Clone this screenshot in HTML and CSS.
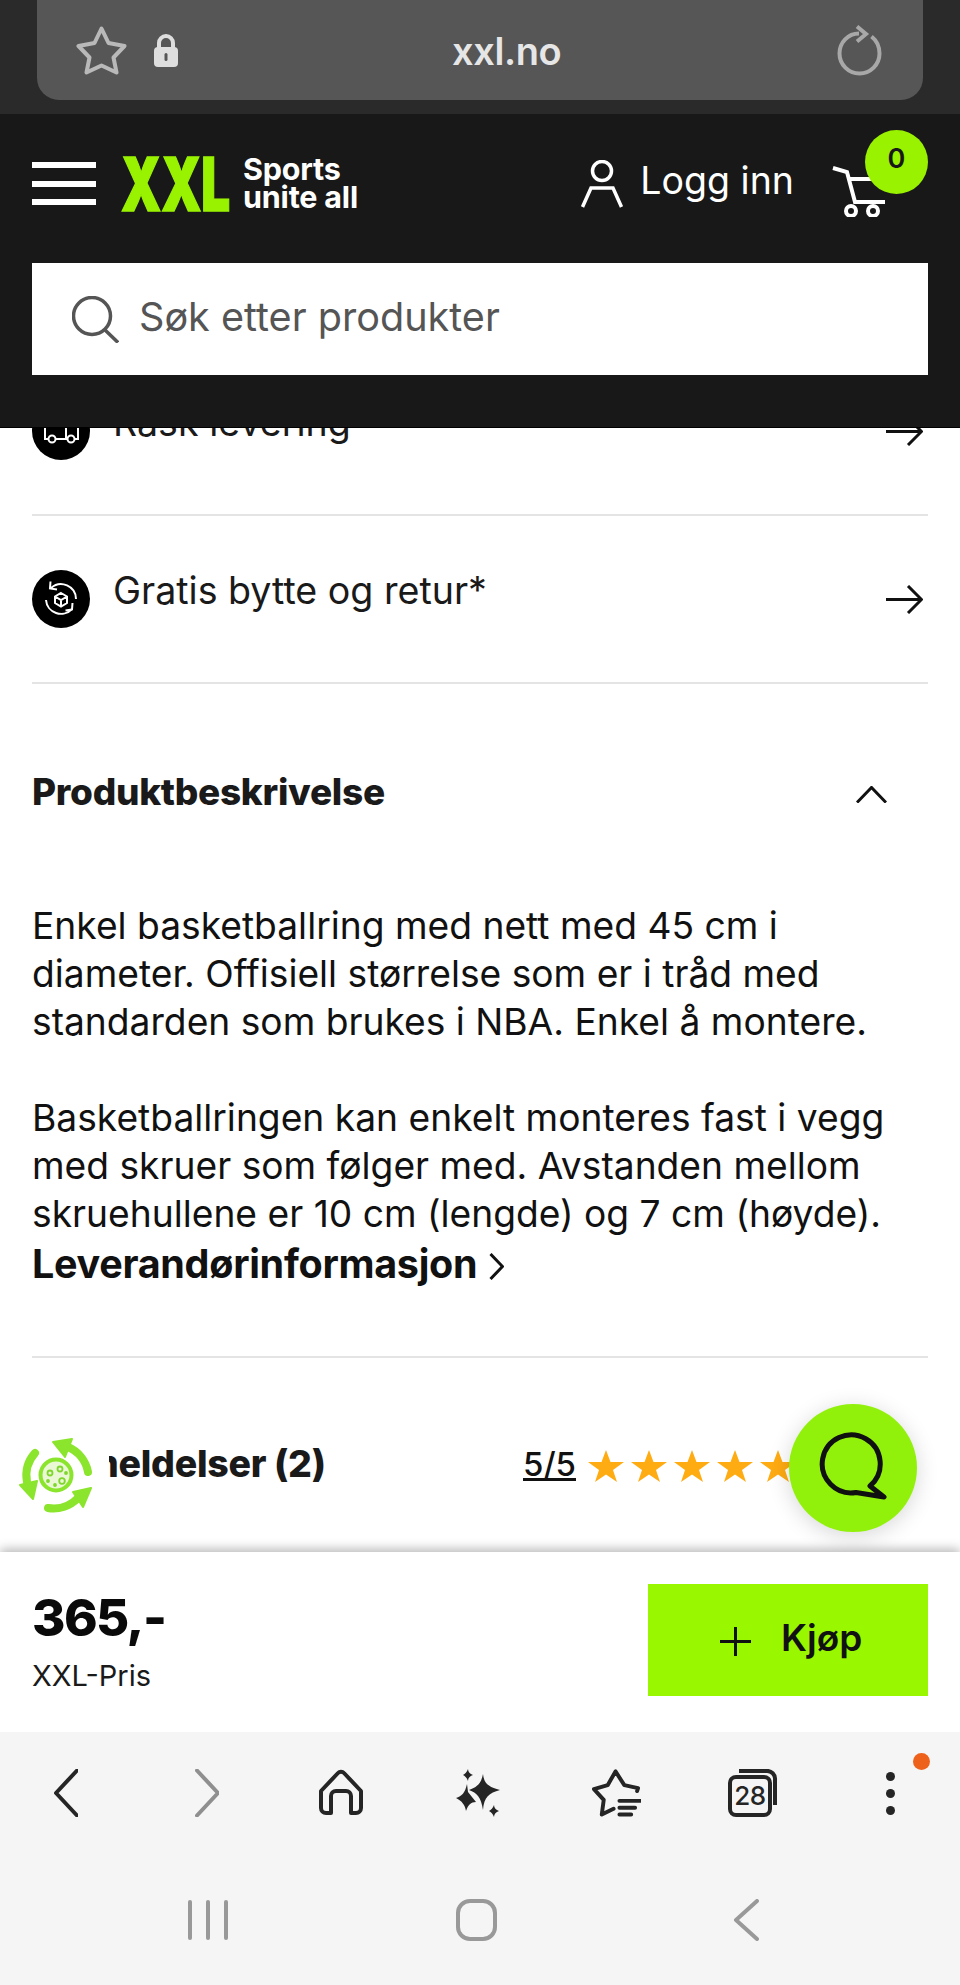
FILE: index.html
```html
<!DOCTYPE html>
<html lang="no">
<head>
<meta charset="utf-8">
<title>XXL</title>
<link rel="stylesheet" href="styles.css">
</head>
<body>
<div class="page">
  <div class="urlbar">
    <div class="pill">
      <svg class="ic-star" viewBox="0 0 51 49"><path d="M25.500 2.500 32.500 17 48.500 20 37.500 31.500 40.500 46.500 25.500 39.500 10.500 46.500 13.500 31.500 2.500 20 18.500 17Z"/></svg>
      <svg class="ic-lock" viewBox="0 0 26 33"><path class="shackle" d="M6 15V9a7 7 0 0 1 14 0v6"/><rect class="lockbody" x="1" y="13" width="24" height="20" rx="4"/><rect class="keyhole" x="11.500" y="19" width="3" height="8" rx="1.500"/></svg>
      <span class="url">xxl.no</span>
      <svg class="ic-reload" viewBox="0 0 45 51"><path d="M22 8.500C11 8.500 2.500 17.500 2.500 28.500a20 20 0 0 0 40 0c0-7-3-13-8-17"/><path d="M20 1.500 29 9 20 16.500"/></svg>
    </div>
  </div>

  <header class="header">
    <div class="header-top">
      <div class="burger"><i></i><i></i><i></i></div>
      <div class="logo"><span class="logo-xxl">XXL</span></div>
      <div class="tagline">Sports<br>unite all</div>
      <svg class="ic-person" viewBox="0 0 42 48"><circle cx="21" cy="11" r="9.500"/><path d="M1.500 47 10 28H32L40.500 47"/></svg>
      <span class="login">Logg inn</span>
      <div class="cart">
        <svg class="ic-cart" viewBox="0 0 54 51"><path d="M1 2 15 6 23 36H53"/><path d="M17 13H52"/><circle cx="19" cy="45" r="5"/><circle cx="41" cy="45" r="5"/></svg>
        <span class="badge">0</span>
      </div>
    </div>
    <div class="search">
      <svg class="ic-search" viewBox="0 0 47 47"><circle cx="20" cy="20" r="18.500"/><path d="M32 33 46 46.500"/></svg>
      <span>Søk etter produkter</span>
    </div>
  </header>

  <main class="main">
    <div class="rows">
      <div class="row">
        <svg class="round" viewBox="0 0 58 58"><circle class="disc" cx="29" cy="29" r="29"/><g class="glyph"><path d="M13 20V37H16.500M23.500 37H35.500M42.500 37H46V24H34V37"/><circle cx="20" cy="37" r="3.500"/><circle cx="39" cy="37" r="3.500"/></g></svg>
        <span class="row-label">Rask levering</span>
        <svg class="arrow" viewBox="0 0 37 29"><path d="M0 14.500H35M22 1 35.500 14.500 22 28"/></svg>
      </div>
      <div class="row">
        <svg class="round" viewBox="0 0 58 58"><circle class="disc" cx="29" cy="29" r="29"/><g class="glyph"><path d="M44 29A15 15 0 0 0 19 18"/><path d="M14 30A15 15 0 0 0 40 39"/><path d="M18.500 11.500 18 18.500 25 19.500"/><path d="M40.500 33 40 39.500 33.500 40.500"/><path d="M29 23 35 26.500V33L29 36.500 23 33V26.500ZM23 26.500 29 30 35 26.500M29 30V36.500"/></g></svg>
        <span class="row-label">Gratis bytte og retur*</span>
        <svg class="arrow" viewBox="0 0 37 29"><path d="M0 14.500H35M22 1 35.500 14.500 22 28"/></svg>
      </div>

      <section class="desc">
        <div class="desc-head">
          <h2>Produktbeskrivelse</h2>
          <svg class="chev-up" viewBox="0 0 31 17"><path d="M1 16.500 15.500 1.500 30 16.500"/></svg>
        </div>
        <p>Enkel basketballring med nett med 45 cm i<br>diameter. Offisiell størrelse som er i tråd med<br>standarden som brukes i NBA. Enkel å montere.</p>
        <p>Basketballringen kan enkelt monteres fast i vegg<br>med skruer som følger med. Avstanden mellom<br>skruehullene er 10 cm (lengde) og 7 cm (høyde).</p>
        <div class="supplier">Leverandørinformasjon <svg class="chev-right" viewBox="0 0 15 27"><path d="M1.500 1 13.500 13.500 1.500 26"/></svg></div>
      </section>

      <div class="reviews">
        <h2>Anmeldelser (2)</h2>
        <a class="score">5/5</a>
        <div class="stars">
          <svg viewBox="0 0 36 32"><path d="M18 0 22.500 12H36L25 20 29 32 18 24.500 7 32 11 20 0 12H13.500Z"/></svg>
          <svg viewBox="0 0 36 32"><path d="M18 0 22.500 12H36L25 20 29 32 18 24.500 7 32 11 20 0 12H13.500Z"/></svg>
          <svg viewBox="0 0 36 32"><path d="M18 0 22.500 12H36L25 20 29 32 18 24.500 7 32 11 20 0 12H13.500Z"/></svg>
          <svg viewBox="0 0 36 32"><path d="M18 0 22.500 12H36L25 20 29 32 18 24.500 7 32 11 20 0 12H13.500Z"/></svg>
          <svg viewBox="0 0 36 32"><path d="M18 0 22.500 12H36L25 20 29 32 18 24.500 7 32 11 20 0 12H13.500Z"/></svg>
        </div>
      </div>
    </div>

    <div class="recycle">
      <svg viewBox="0 0 109 100">
        <g class="arc">
          <path d="M88 47A34 34 0 0 0 68 22"/>
          <path d="M48 83A34 34 0 0 0 78 73"/>
          <path d="M35 28A34 34 0 0 0 27 57"/>
        </g>
        <g class="head">
          <path d="M53 17 72 14 65 32Z"/>
          <path d="M91 63 73 67 83 82Z"/>
          <path d="M33 74 20 60 37 56Z"/>
        </g>
        <circle class="dish" cx="56" cy="50" r="15.500"/>
        <g class="spots">
          <circle cx="50" cy="48" r="2.500"/><circle cx="60" cy="44" r="2.500"/><circle cx="62" cy="56" r="2.800"/>
          <circle cx="66" cy="48" r="1"/><circle cx="48" cy="56" r="1"/><circle cx="55" cy="60" r="1"/>
        </g>
      </svg>
    </div>

    <button class="fab">
      <svg viewBox="0 0 70 70"><path d="M38 60.500A29 29 0 1 1 52 54L66 65Z"/></svg>
    </button>
  </main>

  <div class="buybar">
    <div class="price">
      <strong>365,-</strong>
      <span>XXL-Pris</span>
    </div>
    <button class="buy">
      <svg viewBox="0 0 31 29"><path d="M0 14.500H31M15.500 0V29"/></svg>
      <span>Kjøp</span>
    </button>
  </div>

  <nav class="browser">
    <div class="browser-row">
      <div class="bcell"><svg class="i24 dark" viewBox="0 0 24 48"><path d="M23 1.500 2 24 23 46.500"/></svg></div>
      <div class="bcell"><svg class="i24 grey fwd" viewBox="0 0 24 48"><path d="M2 1.500 23 24 2 46.500"/></svg></div>
      <div class="bcell"><svg class="i44 dark" viewBox="0 0 44 46"><path d="M2 22 19 4a4 4 0 0 1 6 0L42 22V39a5 5 0 0 1-5 5H32V27a5 5 0 0 0-5-5H17a5 5 0 0 0-5 5V44H7a5 5 0 0 1-5-5Z"/></svg></div>
      <div class="bcell"><svg class="i44 fill" viewBox="0 0 44 48"><path d="M27 5C28 15 33 18 44 21 33 24 28 28 27 41 25 28 21 24 13 21 21 18 25 15 27 5Z"/><path d="M11 15 12 23 20 33C15 33 12 36 10 42 9 36 6 32 0 29 6 27 9 24 11 15Z"/><path d="M12 0C12 3 14 5 17 6 14 7 12 9 12 12 11 9 9 7 7 6 9 5 11 3 12 0Z"/><path d="M38 36C38 39 40 41 43 42 40 43 38 45 38 48 37 45 35 43 33 42 35 41 37 39 38 36Z"/></svg></div>
      <div class="bcell"><svg class="i50 dark" viewBox="0 0 51 48"><path d="M47 22 48 19 34 16 25 2 17 16 3 20 13 31 11 46 23 40"/><path d="M29 32H50M29 39H45M29 46H41"/></svg></div>
      <div class="bcell"><svg class="i50 tabs" viewBox="0 0 50 48"><rect x="2" y="8" width="40" height="38" rx="6"/><path d="M11 2H38a8 8 0 0 1 9 9V36"/><text x="22" y="36" text-anchor="middle">28</text></svg></div>
      <div class="bcell more"><i></i><i></i><i></i><b class="dot"></b></div>
    </div>
    <div class="system-row">
      <div class="scell"><div class="bars"><i></i><i></i><i></i></div></div>
      <div class="scell"><div class="homebtn"></div></div>
      <div class="scell"><svg class="sback" viewBox="0 0 26 42"><path d="M24 2 3 21 24 40"/></svg></div>
    </div>
  </nav>
</div>
</body>
</html>
```

FILE: styles.css
```css
* { box-sizing: border-box; }
html, body { margin: 0; padding: 0; }
body { font-family: Inter, "Liberation Sans", Arial, sans-serif; color: #1a1a1a; background: #fff; }
svg { display: block; fill: none; }
h2 { margin: 0; }
button { border: 0; padding: 0; font: inherit; }

.page { width: 960px; height: 1985px; display: flex; flex-direction: column; overflow: hidden; }

.urlbar { height: 114px; flex: none; background: #2a2a2a; padding: 0 37px 14px; }
.pill { height: 100px; background: #565656; border-radius: 0 0 22px 22px; display: flex; align-items: center; position: relative; padding-left: 39px; padding-right: 41px; }
.ic-star { width: 51px; height: 49px; }
.ic-star path { stroke: #b9b9b9; stroke-width: 4; stroke-linejoin: round; }
.ic-lock { width: 26px; height: 33px; margin-left: 26px; }
.shackle { stroke: #dedede; stroke-width: 4; }
.lockbody { fill: #dedede; }
.keyhole { fill: #565656; }
.url { position: absolute; left: 415px; top: 27px; font-size: 38px; font-weight: 600; color: #e6e6e6; line-height: 48px; letter-spacing: -.4px; }
.ic-reload { width: 45px; height: 51px; margin-left: auto; }
.ic-reload path { stroke: #a8a8a8; stroke-width: 4; }

.header { height: 314px; flex: none; background: #181818; border-bottom: 1px solid #000; position: relative; z-index: 3; padding: 0 32px; }
.header-top { height: 149px; display: flex; align-items: center; position: relative; padding-bottom: 10px; }
.burger { width: 64px; height: 43px; display: flex; flex-direction: column; justify-content: space-between; }
.burger i { display: block; height: 6px; background: #fff; }
.logo { width: 107px; height: 54px; margin-left: 25px; }
.logo-xxl { display: block; font: 900 74px/54px Inter, sans-serif; color: #99f200; -webkit-text-stroke: 1.500px #99f200; transform: scaleX(.69); transform-origin: 0 0; white-space: nowrap; }
.tagline { margin-left: 15px; margin-top: -2px; font: 700 30.500px/28px Inter, sans-serif; color: #fff; letter-spacing: -.2px; }
.ic-person { width: 42px; height: 48px; margin-left: auto; margin-top: 0; }
.ic-person circle, .ic-person path { stroke: #fff; stroke-width: 3.500; }
.login { margin-left: 17px; margin-right: 38px; font-size: 37.500px; line-height: 44px; color: #fff; margin-top: -6px; white-space: nowrap; }
.cart { width: 96px; height: 100px; position: relative; margin-top: 12px; }
.ic-cart { width: 54px; height: 51px; position: absolute; left: 0; top: 26px; }
.ic-cart path, .ic-cart circle { stroke: #fff; stroke-width: 4; }
.badge { position: absolute; left: 33px; top: -10px; width: 63px; height: 64px; border-radius: 50%; background: #99f200; color: #181818; font: 600 27px/58px Inter, sans-serif; text-align: center; }
.search { height: 112px; background: #fff; display: flex; align-items: center; padding-left: 40px; gap: 20px; color: #555; font-size: 39.600px; }
.search span { margin-top: -5px; }
.ic-search { width: 47px; height: 47px; }
.ic-search circle, .ic-search path { stroke: #555; stroke-width: 3.500; }

.main { flex: 1; min-height: 0; position: relative; overflow: hidden; }
.rows { margin-top: -80px; padding: 0 32px; }
.row { height: 168px; border-bottom: 2px solid #e4e4e4; display: flex; align-items: center; }
.round { width: 58px; height: 58px; flex: none; }
.disc { fill: #000; }
.glyph path, .glyph circle { stroke: #fff; stroke-width: 2; }
.row-label { margin-left: 23px; font-size: 37.600px; line-height: 44px; margin-bottom: 16px; color: #1a1a1a; }
.arrow { width: 37px; height: 29px; margin-left: auto; margin-right: 5px; }
.arrow path { stroke: #111; stroke-width: 3; }

.desc { padding-top: 88px; border-bottom: 2px solid #e4e4e4; height: 674px; }
.desc-head { display: flex; align-items: center; justify-content: space-between; height: 40px; padding-right: 41px; margin-bottom: 90px; }
.desc-head h2 { font-size: 37px; line-height: 40px; font-weight: 800; color: #1a1a1a; letter-spacing: -.3px; }
.chev-up { width: 31px; height: 17px; margin-top: 4px; }
.chev-up path, .chev-right path { stroke: #111; stroke-width: 3; }
.desc p { margin: 0 0 48px; font-size: 37.200px; line-height: 48px; color: #111; white-space: nowrap; }
.desc p:last-of-type { margin-bottom: 2px; }
.supplier { display: flex; align-items: center; gap: 12px; font-size: 39.500px; line-height: 48px; font-weight: 700; color: #111; letter-spacing: -.3px; }
.chev-right { width: 15px; height: 27px; margin-top: 4px; }

.reviews { height: 194px; display: flex; align-items: center; position: relative; padding-top: 18px; }
.reviews h2 { font-size: 37.500px; line-height: 44px; font-weight: 800; letter-spacing: -.3px; width: 491px; flex: none; }
.score { font-size: 33px; line-height: 36px; font-weight: 500; text-decoration: underline; color: #111; }
.stars { display: flex; gap: 7px; margin-left: 12px; margin-top: 3px; }
.stars svg { width: 36px; height: 32px; flex: none; }
.stars path { fill: #ffab12; }

.recycle { position: absolute; left: 0; top: 997px; width: 109px; height: 100px; background: #fff; }
.recycle svg { width: 109px; height: 100px; }
.arc path { stroke: #8be52d; stroke-width: 8; stroke-linecap: round; }
.head path { fill: #8be52d; stroke: #8be52d; stroke-width: 2; stroke-linejoin: round; }
.dish { fill: #eaf8d6; stroke: #8be52d; stroke-width: 4; }
.spots circle { fill: #eaf8d6; stroke: #7fd62c; stroke-width: 1.800; }

.fab { position: absolute; left: 789px; top: 976px; width: 128px; height: 128px; border-radius: 50%; background: #92f10a; box-shadow: 0 4px 22px rgba(0,0,0,.16); display: flex; align-items: center; justify-content: center; z-index: 2; }
.fab svg { width: 70px; height: 70px; margin-top: -2px; }
.fab path { stroke: #101010; stroke-width: 5; stroke-linejoin: round; }

.buybar { height: 180px; flex: none; background: #fff; box-shadow: 0 -3px 10px rgba(0,0,0,.28); position: relative; z-index: 2; display: flex; justify-content: space-between; padding: 32px 32px 0; }
.price { display: flex; flex-direction: column; }
.price strong { font: 800 51px/60px Inter, sans-serif; color: #0a0a0a; letter-spacing: -1.600px; margin-top: 4px; }
.price span { font-size: 29px; line-height: 36px; color: #1a1a1a; margin-top: 10px; }
.buy { width: 280px; height: 112px; background: #99f700; display: flex; align-items: center; padding-left: 72px; gap: 30px; }
.buy svg { width: 31px; height: 29px; margin-top: 2px; }
.buy path { stroke: #111; stroke-width: 3; }
.buy span { font-size: 37px; font-weight: 600; color: #111; margin-top: -5px; }

.browser { height: 253px; flex: none; background: #f5f5f5; position: relative; z-index: 2; }
.browser-row { display: grid; grid-template-columns: repeat(7, 137.5px); margin-left: -3px; padding-top: 37px; height: 126px; }
.bcell { display: flex; justify-content: center; align-items: flex-start; position: relative; height: 48px; }
.i24 { width: 24px; height: 48px; }
.fwd { margin-left: 8px; }
.i44 { width: 44px; height: 46px; }
.i50 { width: 50px; height: 48px; }
.dark path { stroke: #252525; stroke-width: 4; stroke-linejoin: round; stroke-linecap: round; }
.grey path { stroke: #8f8f8f; stroke-width: 4; stroke-linejoin: round; stroke-linecap: round; }
.fill { height: 48px; }
.fill path { fill: #252525; }
.tabs rect, .tabs path { stroke: #252525; stroke-width: 4; }
.tabs text { font: 500 26px Inter, sans-serif; fill: #252525; letter-spacing: -.5px; }
.more { flex-direction: column; align-items: center; justify-content: flex-start; gap: 8px; padding-top: 3px; }
.more i { display: block; width: 9px; height: 9px; border-radius: 50%; background: #252525; }
.dot { position: absolute; left: 91px; top: -16px; width: 17px; height: 17px; border-radius: 50%; background: #ee611a; }
.system-row { display: grid; grid-template-columns: repeat(3, 269px); padding-left: 73px; margin-top: 41px; }
.scell { display: flex; justify-content: center; align-items: center; height: 42px; }
.bars { display: flex; gap: 14px; height: 40px; }
.bars i { display: block; width: 4px; height: 40px; background: #999; border-radius: 2px; }
.homebtn { width: 41px; height: 42px; border: 4px solid #999; border-radius: 14px; }
.sback { width: 26px; height: 42px; }
.sback path { stroke: #999; stroke-width: 4; stroke-linecap: round; stroke-linejoin: round; }
```
